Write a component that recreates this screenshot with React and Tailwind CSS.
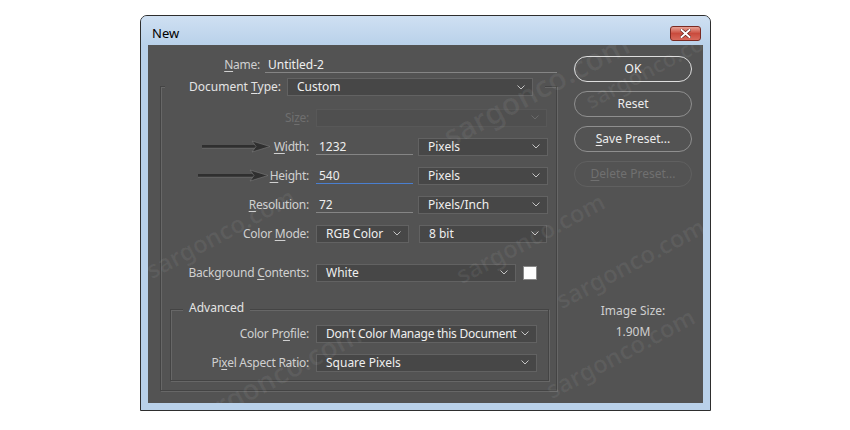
import React from 'react'

const FONT = "font-['Noto_Sans','Segoe_UI',sans-serif]"

function Chevron({ dim }) {
  return (
    <svg width="8" height="5" viewBox="0 0 8 5" className="shrink-0">
      <polyline points="0.5,0.5 4,4 7.5,0.5" fill="none" stroke={dim ? '#6a6a6a' : '#c4c4c4'} strokeWidth="1" />
    </svg>
  )
}

function Sel({ w, children, dim, tight }) {
  return (
    <div className={`${w} h-[18px] flex items-center justify-between pl-[9px] pr-[7px] border ${dim ? 'border-[#585858] bg-[#4f4f4f] text-[#6e6e6e]' : 'border-[#626262] bg-[#474747] text-[#efefef]'}`}>
      <span className={`whitespace-nowrap leading-[16px] ${tight ? 'tracking-[-0.25px]' : ''}`}>{children}</span>
      <Chevron dim={dim} />
    </div>
  )
}

function Field({ w, children, focus }) {
  return (
    <div className={`${w} h-[16px] pl-[3px] leading-[16px] text-[#efefef] border-b ${focus ? 'border-[#4a7fd0]' : 'border-[#858585]'}`}>{children}</div>
  )
}

function Row({ lw, label, className = '', children }) {
  return (
    <div className={`flex items-center h-[19px] ${className}`}>
      <div className={`${lw} text-right whitespace-nowrap tracking-[-0.25px] text-[#d0d0d0]`}>{label}</div>
      <div className="ml-[7px] flex items-center">{children}</div>
    </div>
  )
}

const U = ({ children }) => <span className="underline underline-offset-2">{children}</span>

const MARKS = [
  { l: 'left-[285px]', t: 'top-[22px]', s: 'text-[30px]' },
  { l: 'left-[430px]', t: 'top-[5px]', s: 'text-[22px]' },
  { l: 'left-[-10px]', t: 'top-[170px]', s: 'text-[24px]' },
  { l: 'left-[300px]', t: 'top-[175px]', s: 'text-[24px]' },
  { l: 'left-[400px]', t: 'top-[200px]', s: 'text-[24px]' },
  { l: 'left-[390px]', t: 'top-[290px]', s: 'text-[24px]' },
  { l: 'left-[30px]', t: 'top-[310px]', s: 'text-[28px]' },
]

export default function App() {
  return (
    <div className={`w-[850px] h-[430px] bg-white pt-[15px] pl-[140px] text-[12px] ${FONT}`}>
      <div className="w-[571px] h-[396px] border border-[#2e2e2e] rounded-t-[7px] bg-[#b9d1ea] flex flex-col overflow-hidden">
        {/* title bar */}
        <div className="h-[29px] flex items-start bg-gradient-to-b from-[#cfe0f2] to-[#b9d1ea]">
          <div className="mt-[9px] ml-[11px] leading-[16px] text-[13px] text-black">New</div>
          <div className="ml-auto mr-[9px] mt-[10px] w-[31px] h-[15px] rounded-[3px] border border-[#7a2a22] bg-gradient-to-b from-[#e7a196] via-[#c94b3d] to-[#d86a5c] flex items-center justify-center">
            <svg width="11" height="9" viewBox="0 0 11 9">
              <path d="M1.5 1 L9.5 8 M9.5 1 L1.5 8" stroke="#5a1a14" strokeWidth="3.2" strokeLinecap="square" />
              <path d="M1.5 1 L9.5 8 M9.5 1 L1.5 8" stroke="#ffffff" strokeWidth="2" strokeLinecap="square" />
            </svg>
          </div>
        </div>

        {/* client area */}
        <div className="mx-[7px] h-[358px] bg-[#535353] relative flex overflow-hidden">
          {/* watermark */}
          {MARKS.map((m, i) => (
            <div key={i} aria-hidden="true" className={`absolute ${m.l} ${m.t} ${m.s} -rotate-[28deg] text-white/[0.06] font-semibold pointer-events-none select-none`}>sargonco.com</div>
          ))}

          {/* left column */}
          <div className="w-[426px] pt-[10px]">
            <div className="flex items-center h-[19px]">
              <div className="w-[112px] text-right tracking-[-0.25px] text-[#d0d0d0]"><U>N</U>ame:</div>
              <div className="ml-[5px]"><Field w="w-[292px]">Untitled-2</Field></div>
            </div>

            {/* preset group */}
            <div className="mt-[12px] ml-[12px] w-[397px] h-[305px] border border-[#444444] shadow-[1px_1px_0_#676767,inset_1px_1px_0_#676767]">
              <div className="-mt-[9px] ml-[4px] w-fit pr-[12px] bg-[#535353] flex items-center h-[18px]">
                <div className="w-[116px] text-right text-[#e4e4e4]">Document <U>T</U>ype:</div>
                <div className="ml-[6px]"><Sel w="w-[246px]">Custom</Sel></div>
              </div>

              <Row lw="w-[148px]" className="mt-[12px]" label={<span className="text-[#6f6f6f]">Si<U>z</U>e:</span>}>
                <Sel w="w-[231px]" dim>{''}</Sel>
              </Row>
              <Row lw="w-[148px]" className="mt-[10px]" label={<><U>W</U>idth:</>}>
                <Field w="w-[97px]">1232</Field>
                <div className="ml-[5px]"><Sel w="w-[130px]">Pixels</Sel></div>
              </Row>
              <Row lw="w-[148px]" className="mt-[10px]" label={<><U>H</U>eight:</>}>
                <Field w="w-[97px]" focus>540</Field>
                <div className="ml-[5px]"><Sel w="w-[130px]">Pixels</Sel></div>
              </Row>
              <Row lw="w-[148px]" className="mt-[10px]" label={<><U>R</U>esolution:</>}>
                <Field w="w-[97px]">72</Field>
                <div className="ml-[5px]"><Sel w="w-[130px]">Pixels/Inch</Sel></div>
              </Row>
              <Row lw="w-[148px]" className="mt-[10px]" label={<>Color <U>M</U>ode:</>}>
                <Sel w="w-[93px]">RGB Color</Sel>
                <div className="ml-[10px]"><Sel w="w-[128px]">8 bit</Sel></div>
              </Row>
              <Row lw="w-[148px]" className="mt-[20px]" label={<>Background <U>C</U>ontents:</>}>
                <Sel w="w-[200px]">White</Sel>
                <div className="ml-[7px] w-[14px] h-[14px] bg-white border border-[#8a8a8a]" />
              </Row>

              {/* advanced group */}
              <div className="mt-[27px] ml-[9px] w-[379px] h-[72px] border border-[#444444] shadow-[1px_1px_0_#676767,inset_1px_1px_0_#676767]">
                <div className="-mt-[11px] ml-[12px] w-fit px-[6px] h-[18px] leading-[18px] bg-[#535353] text-[#e4e4e4]">Advanced</div>
                <Row lw="w-[138px]" className="mt-[7px]" label={<>Color Pr<U>o</U>file:</>}>
                  <Sel w="w-[221px]" tight>Don't Color Manage this Document</Sel>
                </Row>
                <Row lw="w-[138px]" className="mt-[10px]" label={<>Pi<U>x</U>el Aspect Ratio:</>}>
                  <Sel w="w-[221px]">Square Pixels</Sel>
                </Row>
              </div>
            </div>
          </div>

          {/* right column */}
          <div className="w-[118px] pt-[11px] flex flex-col items-center">
            <button className="w-[118px] h-[26px] rounded-full border-[1.5px] border-[#dedede] text-[#f2f2f2]">OK</button>
            <button className="mt-[9px] w-[118px] h-[26px] rounded-full border border-[#8f8f8f] text-[#ececec]">Reset</button>
            <button className="mt-[9px] w-[118px] h-[26px] rounded-full border border-[#8f8f8f] text-[#ececec]"><U>S</U>ave Preset...</button>
            <button className="mt-[9px] w-[118px] h-[26px] rounded-full border border-[#606060] text-[#707070]"><U>D</U>elete Preset...</button>
            <div className="mt-[115px] leading-[17px] text-[#cfcfcf]">Image Size:</div>
            <div className="mt-[4px] leading-[17px] text-[#cfcfcf]">1.90M</div>
          </div>

          {/* annotation arrows */}
          <svg className="absolute inset-0 pointer-events-none" width="555" height="358">
            <g>
              <line x1="54" y1="101.5" x2="110" y2="101.5" stroke="#2f2f2f" strokeWidth="2.8" />
              <line x1="54" y1="103.2" x2="108" y2="103.2" stroke="#777777" strokeWidth="0.6" />
              <polygon points="104,96 122,101.5 104,107 108,101.5" fill="#303030" stroke="#7a7a7a" strokeWidth="0.6" />
            </g>
            <g>
              <line x1="50" y1="130.5" x2="108" y2="130.5" stroke="#2f2f2f" strokeWidth="2.8" />
              <line x1="50" y1="132.2" x2="106" y2="132.2" stroke="#777777" strokeWidth="0.6" />
              <polygon points="102,125 120,130.5 102,136 106,130.5" fill="#303030" stroke="#7a7a7a" strokeWidth="0.6" />
            </g>
          </svg>
        </div>
      </div>
    </div>
  )
}
